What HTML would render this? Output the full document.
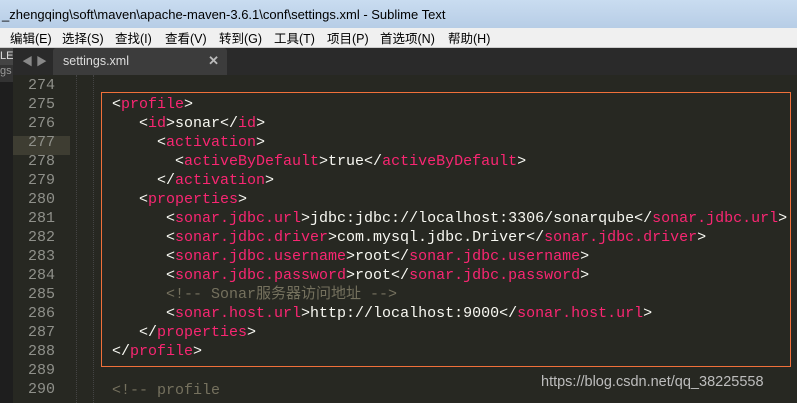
<!DOCTYPE html>
<html><head><meta charset="utf-8"><style>
*{margin:0;padding:0;box-sizing:border-box}
body{width:797px;height:403px;overflow:hidden;background:#272822;position:relative;font-family:"Liberation Sans","Noto Sans CJK SC",sans-serif}
.title{position:absolute;left:0;top:0;width:797px;height:28px;background:linear-gradient(#c9dcf0,#b7cde6);font-size:13px;color:#000;padding:7px 0 0 2px;white-space:nowrap}
.menu{position:absolute;left:0;top:28px;width:797px;height:20px;background:#f0f0f0;font-size:12.5px;color:#000;white-space:nowrap;border-bottom:1px solid #ccc}
.menu span{position:absolute;top:0px}
.tabbar{position:absolute;left:0;top:48px;width:797px;height:27px;background:#2a2a2a}
.tab{position:absolute;left:53px;top:0;width:174px;height:27px;background:#3c3c3c;border-radius:3px 3px 0 0;color:#ddd;font-size:12.5px;padding:6px 0 0 10px}
.tab b{position:absolute;right:8px;top:5px;color:#bbb;font-size:13px}
.side{position:absolute;left:0;top:48px;width:13px;height:355px;background:#1e1e1e}
.code{position:absolute;left:0;top:75px;font-family:"Liberation Mono","Noto Sans CJK SC",monospace;font-size:15px;color:#f8f8f2}
.ln{position:absolute;left:13px;width:42px;text-align:right;color:#8f908a;height:19px;line-height:19px}
.l{position:absolute;height:19px;line-height:19px;white-space:pre}
.t{color:#f92672}.c{color:#75715e}
.box{position:absolute;left:101px;top:92px;width:690px;height:275px;border:1px solid #f0703a}
.wm{position:absolute;left:541px;top:374px;font-size:14.5px;color:#bdbdbd}
</style></head><body>
<div class="title">_zhengqing\soft\maven\apache-maven-3.6.1\conf\settings.xml - Sublime Text</div>
<div class="menu"><span style="left:10px">编辑(E)</span><span style="left:62px">选择(S)</span><span style="left:115px">查找(I)</span><span style="left:165px">查看(V)</span><span style="left:219px">转到(G)</span><span style="left:274px">工具(T)</span><span style="left:327px">项目(P)</span><span style="left:380px">首选项(N)</span><span style="left:448px">帮助(H)</span></div>
<div class="tabbar"><span style="position:absolute;left:22px;top:5px;color:#888;font-size:11px">◀ ▶</span><div class="tab">settings.xml<b>✕</b></div></div>
<div class="side"><div style="background:#444;color:#ddd;font-size:11px;height:17px;padding-top:2px;overflow:hidden;width:13px">LE</div><div style="background:#333;color:#999;font-size:11px;height:17px;overflow:hidden;width:13px">gs</div></div>
<div style="position:absolute;left:13px;top:136px;width:57px;height:19px;background:#3e3d32"></div>
<div style="position:absolute;left:76px;top:75px;height:328px;border-left:1px dotted #444"></div>
<div style="position:absolute;left:93px;top:75px;height:328px;border-left:1px dotted #444"></div>
<div class="box"></div>
<div class="code">
<div class="ln" style="top:1px">274</div>
<div class="ln" style="top:20px">275</div>
<div class="ln" style="top:39px">276</div>
<div class="ln" style="top:58px">277</div>
<div class="ln" style="top:77px">278</div>
<div class="ln" style="top:96px">279</div>
<div class="ln" style="top:115px">280</div>
<div class="ln" style="top:134px">281</div>
<div class="ln" style="top:153px">282</div>
<div class="ln" style="top:172px">283</div>
<div class="ln" style="top:191px">284</div>
<div class="ln" style="top:210px">285</div>
<div class="ln" style="top:229px">286</div>
<div class="ln" style="top:248px">287</div>
<div class="ln" style="top:267px">288</div>
<div class="ln" style="top:286px">289</div>
<div class="ln" style="top:305px">290</div>
<div class="l" style="left:112px;top:20px">&lt;<span class="t">profile</span>&gt;</div>
<div class="l" style="left:139px;top:39px">&lt;<span class="t">id</span>&gt;sonar&lt;/<span class="t">id</span>&gt;</div>
<div class="l" style="left:157px;top:58px">&lt;<span class="t">activation</span>&gt;</div>
<div class="l" style="left:175px;top:77px">&lt;<span class="t">activeByDefault</span>&gt;true&lt;/<span class="t">activeByDefault</span>&gt;</div>
<div class="l" style="left:157px;top:96px">&lt;/<span class="t">activation</span>&gt;</div>
<div class="l" style="left:139px;top:115px">&lt;<span class="t">properties</span>&gt;</div>
<div class="l" style="left:166px;top:134px">&lt;<span class="t">sonar.jdbc.url</span>&gt;jdbc:jdbc://localhost:3306/sonarqube&lt;/<span class="t">sonar.jdbc.url</span>&gt;</div>
<div class="l" style="left:166px;top:153px">&lt;<span class="t">sonar.jdbc.driver</span>&gt;com.mysql.jdbc.Driver&lt;/<span class="t">sonar.jdbc.driver</span>&gt;</div>
<div class="l" style="left:166px;top:172px">&lt;<span class="t">sonar.jdbc.username</span>&gt;root&lt;/<span class="t">sonar.jdbc.username</span>&gt;</div>
<div class="l" style="left:166px;top:191px">&lt;<span class="t">sonar.jdbc.password</span>&gt;root&lt;/<span class="t">sonar.jdbc.password</span>&gt;</div>
<div class="l c" style="left:166px;top:210px">&lt;!-- Sonar服务器访问地址 --&gt;</div>
<div class="l" style="left:166px;top:229px">&lt;<span class="t">sonar.host.url</span>&gt;http://localhost:9000&lt;/<span class="t">sonar.host.url</span>&gt;</div>
<div class="l" style="left:139px;top:248px">&lt;/<span class="t">properties</span>&gt;</div>
<div class="l" style="left:112px;top:267px">&lt;/<span class="t">profile</span>&gt;</div>
<div class="l c" style="left:112px;top:306px">&lt;!-- profile</div>
</div>
<div class="wm">https://blog.csdn.net/qq_38225558</div>
</body></html>
